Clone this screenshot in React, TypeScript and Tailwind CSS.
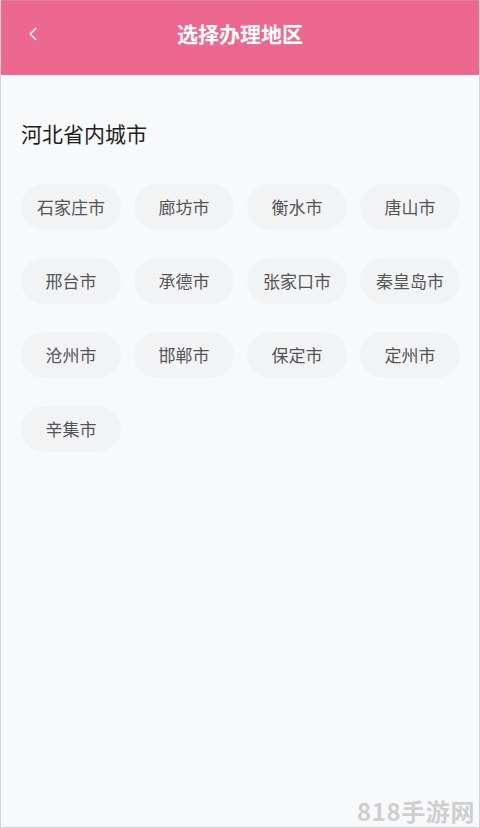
import React from 'react';
import { ChevronLeft } from 'lucide-react';

const cities = [
    '石家庄市', '廊坊市', '衡水市', '唐山市',
    '邢台市', '承德市', '张家口市', '秦皇岛市',
    '沧州市', '邯郸市', '保定市', '定州市',
    '辛集市',
];

export default function App() {
    return (
        <div
            className="relative w-[480px] h-[828px] bg-[#f8f9fb] border-x border-b border-[#d4d4d8] overflow-hidden"
            style={{ fontFamily: '"Noto Sans CJK SC", "Noto Sans", sans-serif' }}
        >
            {/* header */}
            <div className="relative h-[75px] bg-[#ec6891] border-t border-[#d9839e] flex items-center justify-center">
                <ChevronLeft className="absolute left-[21px] top-[22px] text-white" size={22} strokeWidth={1.75} />
                <h1 className="text-white text-[21px] font-bold leading-none -mt-[10px]">选择办理地区</h1>
            </div>

            <div className="px-[20px] pt-[44px]">
                <h2 className="text-[21px] leading-[28px] text-[#1f1f1f]">河北省内城市</h2>

                <div className="grid grid-cols-[repeat(4,100px)] gap-x-[13px] gap-y-[28px] mt-[37px]">
                    {cities.map((city) => (
                        <div
                            key={city}
                            className="h-[46px] rounded-full bg-[#f2f3f5] flex items-center justify-center text-[17px] text-[#555555]"
                        >
                            {city}
                        </div>
                    ))}
                </div>
            </div>

            {/* watermark */}
            <div className="absolute right-[4px] bottom-[2px] text-[24px] font-bold text-[#cfcfcf] tracking-wide leading-[28px]">
                818手游网
            </div>
        </div>
    );
}
